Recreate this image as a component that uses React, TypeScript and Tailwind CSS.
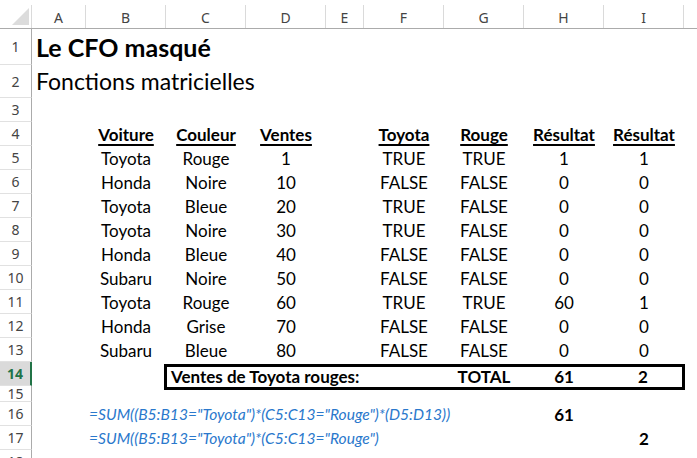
import React from "react";

const COLS = [
  { k: "A", w: "w-[54px]" },
  { k: "B", w: "w-[80px]" },
  { k: "C", w: "w-[80px]" },
  { k: "D", w: "w-[80px]" },
  { k: "E", w: "w-[38px]" },
  { k: "F", w: "w-[80px]" },
  { k: "G", w: "w-[80px]" },
  { k: "H", w: "w-[80px]" },
  { k: "I", w: "w-[80px]" },
];

const DATA: string[][] = [
  ["Toyota", "Rouge", "1", "TRUE", "TRUE", "1", "1"],
  ["Honda", "Noire", "10", "FALSE", "FALSE", "0", "0"],
  ["Toyota", "Bleue", "20", "TRUE", "FALSE", "0", "0"],
  ["Toyota", "Noire", "30", "TRUE", "FALSE", "0", "0"],
  ["Honda", "Bleue", "40", "FALSE", "FALSE", "0", "0"],
  ["Subaru", "Noire", "50", "FALSE", "FALSE", "0", "0"],
  ["Toyota", "Rouge", "60", "TRUE", "TRUE", "60", "1"],
  ["Honda", "Grise", "70", "FALSE", "FALSE", "0", "0"],
  ["Subaru", "Bleue", "80", "FALSE", "FALSE", "0", "0"],
];

function RowHead({ n, selected }: { n: number; selected?: boolean }) {
  if (selected) {
    return (
      <div className="w-[32px] shrink-0 h-full flex items-center justify-center bg-[#dadada] border-r-2 border-r-[#217346] border-b border-b-[#e1e1e1] font-['Noto_Sans',sans-serif] text-[14px] font-bold text-[#217346]">
        {n}
      </div>
    );
  }
  return (
    <div className="w-[32px] shrink-0 h-full flex items-center justify-center border-r border-r-[#ababab] border-b border-b-[#e1e1e1] font-['Noto_Sans',sans-serif] text-[14px] text-[#444444] overflow-hidden">
      {n}
    </div>
  );
}

function Cell({ w, children, className = "" }: { w: string; children?: React.ReactNode; className?: string }) {
  return (
    <div className={`${w} shrink-0 h-full flex items-end justify-center pb-[1px] leading-[20px] whitespace-nowrap ${className}`}>
      {children}
    </div>
  );
}

export default function App() {
  return (
    <div className="w-[697px] h-[458px] overflow-hidden bg-white font-['Lato',sans-serif] text-black text-[17px]">
      <div className="h-[5px]" />
      {/* column headers */}
      <div className="h-[24px] flex border-b border-[#ababab]">
        <div className="w-[32px] shrink-0 h-full border-r border-[#dadada] relative">
          <svg className="absolute left-[12px] top-[3px]" width="17" height="17" viewBox="0 0 17 17">
            <polygon points="17,0 17,17 0,17" fill="#dcdcdc" />
          </svg>
        </div>
        {COLS.map((c) => (
          <div
            key={c.k}
            className={`${c.w} shrink-0 h-full border-r border-[#dadada] flex items-center justify-center pt-[2px] font-['Noto_Sans',sans-serif] text-[14px] text-[#444444]`}
          >
            {c.k}
          </div>
        ))}
      </div>

      {/* row 1 */}
      <div className="h-[36px] flex">
        <RowHead n={1} />
        <div className="flex-1 flex items-end pl-[4px] pb-[3px] text-[25px] font-bold leading-[30px] whitespace-nowrap">
          Le CFO masqué
        </div>
      </div>
      {/* row 2 */}
      <div className="h-[33px] flex">
        <RowHead n={2} />
        <div className="flex-1 flex items-end pl-[4px] pb-[3px] text-[23px] leading-[28px] whitespace-nowrap">
          Fonctions matricielles
        </div>
      </div>
      {/* row 3 */}
      <div className="h-[24px] flex">
        <RowHead n={3} />
      </div>
      {/* row 4 */}
      <div className="h-[24px] flex">
        <RowHead n={4} />
        <Cell w="w-[54px]" />
        {["Voiture", "Couleur", "Ventes"].map((t) => (
          <Cell key={t} w="w-[80px]" className="font-bold">
            <span className="underline underline-offset-[3px] decoration-[1.5px]">{t}</span>
          </Cell>
        ))}
        <Cell w="w-[38px]" />
        {["Toyota", "Rouge", "Résultat", "Résultat"].map((t, i) => (
          <Cell key={i} w="w-[80px]" className="font-bold">
            <span className="underline underline-offset-[3px] decoration-[1.5px]">{t}</span>
          </Cell>
        ))}
      </div>
      {DATA.map((r, i) => (
        <div key={i} className="h-[24px] flex">
          <RowHead n={5 + i} />
          <Cell w="w-[54px]" />
          <Cell w="w-[80px]">{r[0]}</Cell>
          <Cell w="w-[80px]">{r[1]}</Cell>
          <Cell w="w-[80px]">{r[2]}</Cell>
          <Cell w="w-[38px]" />
          <Cell w="w-[80px]">{r[3]}</Cell>
          <Cell w="w-[80px]">{r[4]}</Cell>
          <Cell w="w-[80px]">{r[5]}</Cell>
          <Cell w="w-[80px]">{r[6]}</Cell>
        </div>
      ))}
      {/* row 14 */}
      <div className="h-[24px] flex items-start relative z-10">
        <RowHead n={14} selected />
        <div className="w-[54px] shrink-0" />
        <div className="w-[80px] shrink-0" />
        <div className="w-[521px] -ml-[2px] mt-[2px] h-[26px] shrink-0 border-[3px] border-black flex items-center font-bold leading-[20px] whitespace-nowrap">
          <div className="w-[277px] shrink-0 pl-[4px]">Ventes de Toyota rouges:</div>
          <div className="w-[80px] shrink-0 text-center">TOTAL</div>
          <div className="w-[80px] shrink-0 text-center">61</div>
          <div className="w-[78px] shrink-0 text-center">2</div>
        </div>
      </div>
      {/* row 15 */}
      <div className="h-[16px] flex">
        <RowHead n={15} />
      </div>
      {/* row 16 */}
      <div className="h-[24px] flex">
        <RowHead n={16} />
        <Cell w="w-[54px]" />
        <div className="w-[80px] shrink-0 h-full flex items-end pb-[2px] pl-[3px] leading-[20px] whitespace-nowrap italic text-[15.6px] text-[#2a78cc] overflow-visible">
          {'=SUM((B5:B13="Toyota")*(C5:C13="Rouge")*(D5:D13))'}
        </div>
        <Cell w="w-[80px]" />
        <Cell w="w-[80px]" />
        <Cell w="w-[38px]" />
        <Cell w="w-[80px]" />
        <Cell w="w-[80px]" />
        <Cell w="w-[80px]" className="font-bold">61</Cell>
        <Cell w="w-[80px]" />
      </div>
      {/* row 17 */}
      <div className="h-[24px] flex">
        <RowHead n={17} />
        <Cell w="w-[54px]" />
        <div className="w-[80px] shrink-0 h-full flex items-end pb-[2px] pl-[3px] leading-[20px] whitespace-nowrap italic text-[15.6px] text-[#2a78cc] overflow-visible">
          {'=SUM((B5:B13="Toyota")*(C5:C13="Rouge")'}
        </div>
        <Cell w="w-[80px]" />
        <Cell w="w-[80px]" />
        <Cell w="w-[38px]" />
        <Cell w="w-[80px]" />
        <Cell w="w-[80px]" />
        <Cell w="w-[80px]" />
        <Cell w="w-[80px]" className="font-bold">2</Cell>
      </div>
      {/* row 18 */}
      <div className="h-[24px] flex">
        <RowHead n={18} />
      </div>
    </div>
  );
}
